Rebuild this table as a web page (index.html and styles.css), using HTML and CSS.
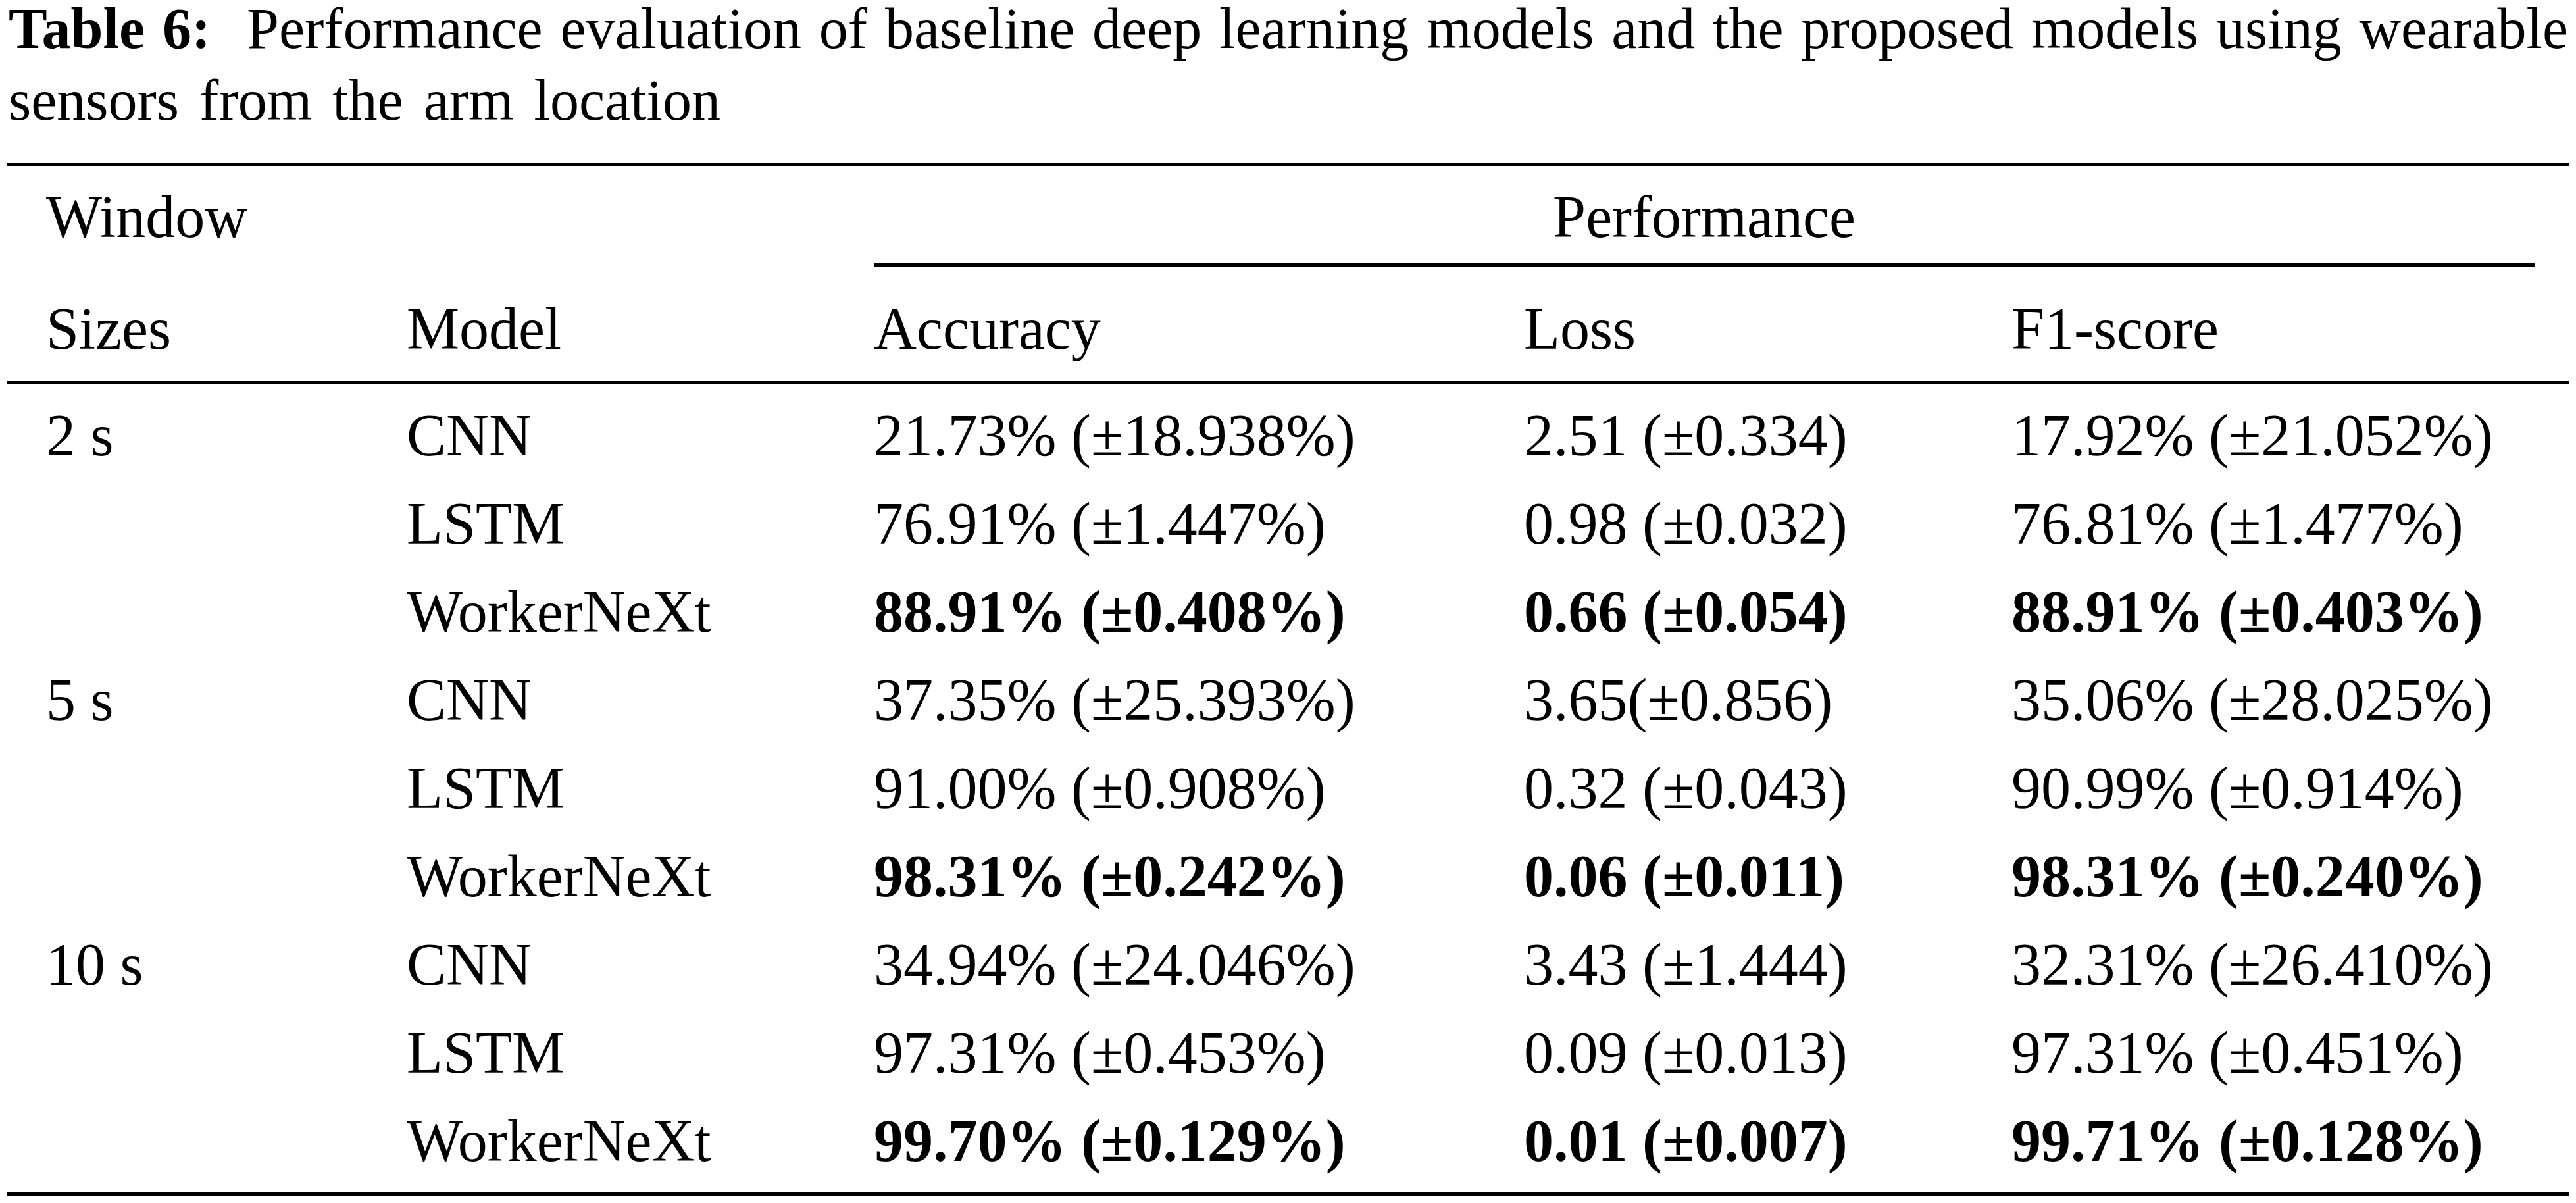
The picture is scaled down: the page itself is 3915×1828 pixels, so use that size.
FILE: index.html
```html
<!DOCTYPE html>
<html lang="en">
<head>
<meta charset="utf-8">
<title>Table 6</title>
<link rel="stylesheet" href="styles.css">
</head>
<body>
<div class="page">
  <p class="caption"><span class="line full"><b class="label">Table 6:</b> Performance evaluation of baseline deep learning models and the proposed models using wearable</span> <span class="line rest">sensors from the arm location</span></p>
  <div class="table" role="table">
    <div class="row head1" role="row">
      <div class="cell">Window</div>
      <div class="cell"></div>
      <div class="cell span3"><div class="group">Performance</div></div>
    </div>
    <div class="row head2" role="row">
      <div class="cell">Sizes</div>
      <div class="cell">Model</div>
      <div class="cell">Accuracy</div>
      <div class="cell">Loss</div>
      <div class="cell">F1-score</div>
    </div>
    <div class="tbody">
      <div class="row first" role="row">
        <div class="cell">2 s</div><div class="cell">CNN</div>
        <div class="cell">21.73% (±18.938%)</div><div class="cell">2.51 (±0.334)</div><div class="cell">17.92% (±21.052%)</div>
      </div>
      <div class="row" role="row">
        <div class="cell"></div><div class="cell">LSTM</div>
        <div class="cell">76.91% (±1.447%)</div><div class="cell">0.98 (±0.032)</div><div class="cell">76.81% (±1.477%)</div>
      </div>
      <div class="row best" role="row">
        <div class="cell"></div><div class="cell">WorkerNeXt</div>
        <div class="cell">88.91% (±0.408%)</div><div class="cell">0.66 (±0.054)</div><div class="cell">88.91% (±0.403%)</div>
      </div>
      <div class="row" role="row">
        <div class="cell">5 s</div><div class="cell">CNN</div>
        <div class="cell">37.35% (±25.393%)</div><div class="cell">3.65(±0.856)</div><div class="cell">35.06% (±28.025%)</div>
      </div>
      <div class="row" role="row">
        <div class="cell"></div><div class="cell">LSTM</div>
        <div class="cell">91.00% (±0.908%)</div><div class="cell">0.32 (±0.043)</div><div class="cell">90.99% (±0.914%)</div>
      </div>
      <div class="row best" role="row">
        <div class="cell"></div><div class="cell">WorkerNeXt</div>
        <div class="cell">98.31% (±0.242%)</div><div class="cell">0.06 (±0.011)</div><div class="cell">98.31% (±0.240%)</div>
      </div>
      <div class="row" role="row">
        <div class="cell">10 s</div><div class="cell">CNN</div>
        <div class="cell">34.94% (±24.046%)</div><div class="cell">3.43 (±1.444)</div><div class="cell">32.31% (±26.410%)</div>
      </div>
      <div class="row" role="row">
        <div class="cell"></div><div class="cell">LSTM</div>
        <div class="cell">97.31% (±0.453%)</div><div class="cell">0.09 (±0.013)</div><div class="cell">97.31% (±0.451%)</div>
      </div>
      <div class="row best last" role="row">
        <div class="cell"></div><div class="cell">WorkerNeXt</div>
        <div class="cell">99.70% (±0.129%)</div><div class="cell">0.01 (±0.007)</div><div class="cell">99.71% (±0.128%)</div>
      </div>
    </div>
  </div>
</div>
</body>
</html>
```

FILE: styles.css
```css
html, body {
  margin: 0;
  padding: 0;
  background: #ffffff;
}

body {
  font-family: "Liberation Serif", "Times New Roman", serif;
  color: #000000;
}

.page {
  width: 3915px;
}

.caption {
  margin: -11px 12px 0 13px;
  font-size: 88px;
  line-height: 109px;
}

.line {
  display: block;
  white-space: nowrap;
}

.full {
  text-align: justify;
  text-align-last: justify;
}

.rest {
  word-spacing: 9px;
}

.label {
  font-weight: bold;
  margin-right: 28px;
}

.table {
  margin: 40px 0 0 10px;
  width: 3895px;
  border-top: 5px solid #000;
  border-bottom: 5px solid #000;
  font-size: 90px;
  line-height: 134px;
}

.row {
  display: grid;
  grid-template-columns: 548px 710px 988px 741px 908px;
}

.cell {
  padding-left: 60px;
  white-space: nowrap;
}

.span3 {
  grid-column: span 3;
}

.head1 .cell {
  padding-top: 11px;
}

.group {
  margin-right: 53px;
  padding-bottom: 3px;
  border-bottom: 5px solid #000;
  text-align: center;
}

.head2 .cell {
  padding-top: 28px;
  padding-bottom: 12px;
}

.head2 {
  border-bottom: 5px solid #000;
}

.first .cell {
  padding-top: 11px;
}

.last .cell {
  padding-bottom: 11px;
}

.best .cell:nth-child(n+3) {
  font-weight: bold;
}
```
